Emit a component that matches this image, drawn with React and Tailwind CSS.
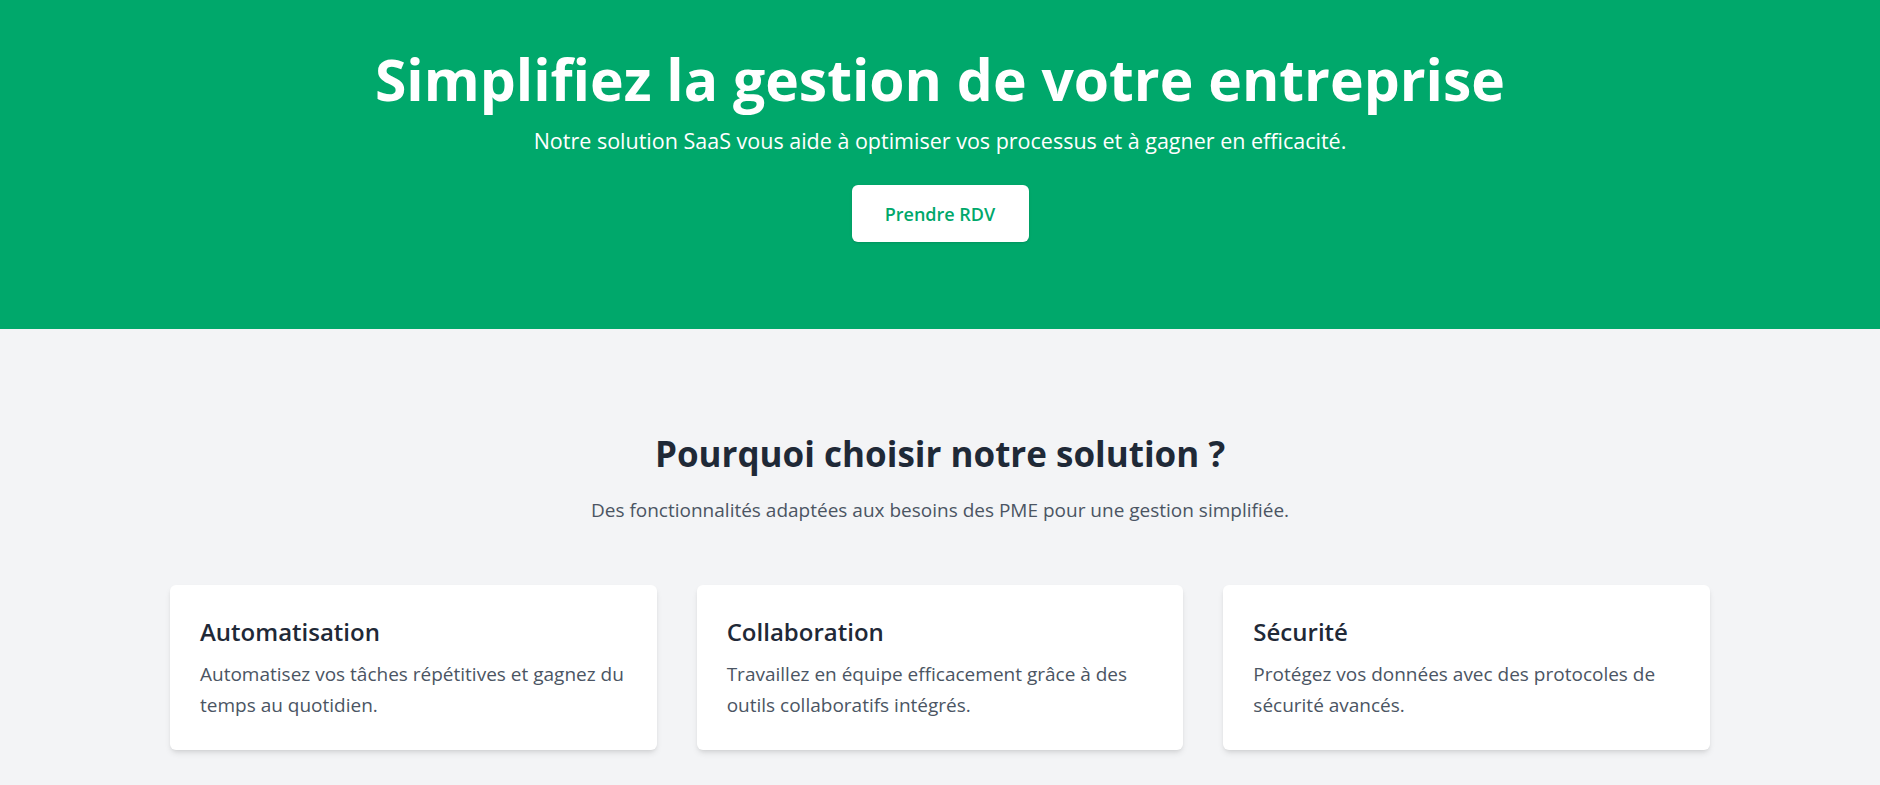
export default function App() {
  const features = [
    {
      title: "Automatisation",
      text: "Automatisez vos tâches répétitives et gagnez du temps au quotidien.",
    },
    {
      title: "Collaboration",
      text: "Travaillez en équipe efficacement grâce à des outils collaboratifs intégrés.",
    },
    {
      title: "Sécurité",
      text: "Protégez vos données avec des protocoles de sécurité avancés.",
    },
  ];
  return (
    <div className="min-h-screen bg-[#f3f4f6] font-['Open_Sans',sans-serif]">
      <section className="bg-[#00a86b] text-white h-[329px] flex flex-col items-center pt-[49px]">
        <h1 className="text-[57px] font-bold leading-[60px]">Simplifiez la gestion de votre entreprise</h1>
        <p className="mt-[18px] text-[21.5px] leading-7">
          Notre solution SaaS vous aide à optimiser vos processus et à gagner en efficacité.
        </p>
        <button className="mt-[30px] h-[57px] w-[177px] rounded-md bg-white text-lg font-semibold text-[#00a86b] shadow-sm">
          Prendre RDV
        </button>
      </section>
      <section className="flex flex-col items-center pt-[105px] pb-8">
        <h2 className="text-[35px] font-bold leading-10 text-[#1f2937]">Pourquoi choisir notre solution ?</h2>
        <p className="mt-[22px] text-[19px] leading-7 text-[#4b5563]">
          Des fonctionnalités adaptées aux besoins des PME pour une gestion simplifiée.
        </p>
        <div className="mt-[61px] grid w-[1540px] grid-cols-3 gap-10">
          {features.map((f) => (
            <div key={f.title} className="h-[165px] rounded-md bg-white px-[30px] pt-[31px] shadow-md">
              <h3 className="text-2xl font-semibold leading-8 text-[#1f2937]">{f.title}</h3>
              <p className="mt-[11px] text-[19px] leading-[31px] text-[#4b5563]">{f.text}</p>
            </div>
          ))}
        </div>
      </section>
    </div>
  );
}
